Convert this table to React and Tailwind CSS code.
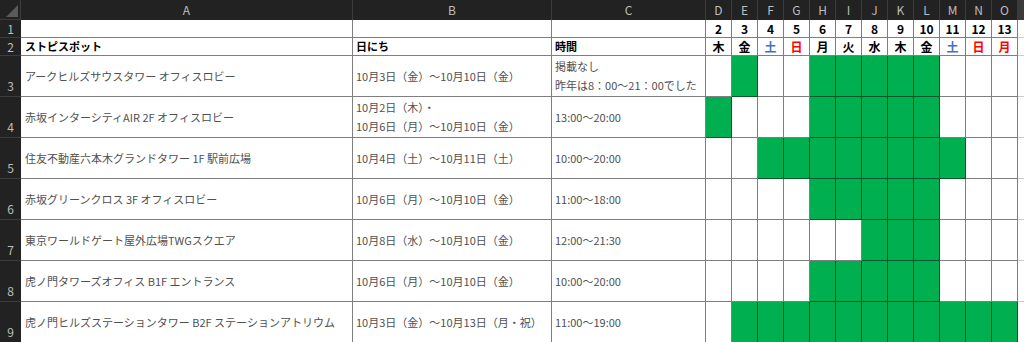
import React from 'react';

const days = [
  { d: 2, w: '木' },
  { d: 3, w: '金' },
  { d: 4, w: '土', c: 'text-[#4472c4]' },
  { d: 5, w: '日', c: 'text-[#ff0000]' },
  { d: 6, w: '月' },
  { d: 7, w: '火' },
  { d: 8, w: '水' },
  { d: 9, w: '木' },
  { d: 10, w: '金' },
  { d: 11, w: '土', c: 'text-[#4472c4]' },
  { d: 12, w: '日', c: 'text-[#ff0000]' },
  { d: 13, w: '月', c: 'text-[#ff0000]' },
];

const letters = ['D', 'E', 'F', 'G', 'H', 'I', 'J', 'K', 'L', 'M', 'N', 'O'];

const range = (a, b) => Array.from({ length: b - a + 1 }, (_, i) => a + i);

const spots = [
  { no: 3, spot: 'アークヒルズサウスタワー オフィスロビー', date: ['10月3日（金）～10月10日（金）'], time: ['掲載なし', '昨年は8：00～21：00でした'], on: [3, ...range(6, 10)] },
  { no: 4, spot: '赤坂インターシティAIR 2F オフィスロビー', date: ['10月2日（木）・', '10月6日（月）～10月10日（金）'], time: ['13:00～20:00'], on: [2, ...range(6, 10)] },
  { no: 5, spot: '住友不動産六本木グランドタワー 1F 駅前広場', date: ['10月4日（土）～10月11日（土）'], time: ['10:00～20:00'], on: range(4, 11) },
  { no: 6, spot: '赤坂グリーンクロス 3F オフィスロビー', date: ['10月6日（月）～10月10日（金）'], time: ['11:00～18:00'], on: range(6, 10) },
  { no: 7, spot: '東京ワールドゲート屋外広場TWGスクエア', date: ['10月8日（水）～10月10日（金）'], time: ['12:00～21:30'], on: range(8, 10) },
  { no: 8, spot: '虎ノ門タワーズオフィス B1F エントランス', date: ['10月6日（月）～10月10日（金）'], time: ['10:00～20:00'], on: range(6, 10) },
  { no: 9, spot: '虎ノ門ヒルズステーションタワー B2F ステーションアトリウム', date: ['10月3日（金）～10月13日（月・祝）'], time: ['11:00～19:00'], on: range(3, 13) },
];

const colHead = 'flex items-center justify-center bg-[#222222] text-[#bdbdbd] text-[12px] border-r border-[#3c3c3c] font-[\'Noto_Sans\',sans-serif]';
const rowHead = 'flex justify-center bg-[#222222] text-[#bdbdbd] text-[12px] border-b border-[#3c3c3c] font-[\'Noto_Sans\',sans-serif]';
const cell = 'border-r border-b border-black/50';

const App = () => {
  return (
    <div className="w-[1024px] h-[342px] overflow-hidden bg-white font-['Noto_Sans_CJK_JP','Noto_Sans',sans-serif]">
      <div className="grid grid-cols-[21px_332px_199px_154px_repeat(12,26px)_1fr] grid-rows-[20px_18px_18px_repeat(7,41px)]">
        {/* Column letters */}
        <div className="relative bg-[#222222] border-r border-b border-[#3c3c3c]">
          <svg className="absolute right-[2px] bottom-[2px]" width="12" height="12" viewBox="0 0 12 12">
            <polygon points="12,0 12,12 0,12" fill="#5a5a5a" />
          </svg>
        </div>
        <div className={colHead}>A</div>
        <div className={colHead}>B</div>
        <div className={colHead}>C</div>
        {letters.map(l => (
          <div key={l} className={colHead}>{l}</div>
        ))}
        <div className="bg-[#3a3a3a]" />

        {/* Row 1 */}
        <div className={`${rowHead} items-center`}>1</div>
        <div className={cell} />
        <div className={cell} />
        <div className={cell} />
        {days.map(d => (
          <div key={d.d} className={`${cell} flex items-center justify-center text-[12px] font-bold text-black`}>{d.d}</div>
        ))}
        <div className="border-b border-black/20" />

        {/* Row 2 */}
        <div className={`${rowHead} items-center`}>2</div>
        <div className={`${cell} flex items-center pl-1 text-[11px] font-bold text-black`}>ストピスポット</div>
        <div className={`${cell} flex items-center pl-[3px] text-[11px] font-bold text-black`}>日にち</div>
        <div className={`${cell} flex items-center pl-[3px] text-[11px] font-bold text-black`}>時間</div>
        {days.map(d => (
          <div key={d.d} className={`${cell} flex items-center justify-center text-[12px] font-bold ${d.c || 'text-black'}`}>{d.w}</div>
        ))}
        <div className="border-b border-black/20" />

        {/* Spots */}
        {spots.map(s => (
          <React.Fragment key={s.no}>
            <div className={`${rowHead} items-end pb-[1px]`}>{s.no}</div>
            <div className={`${cell} flex items-center pl-1 text-[11px] text-[#505050]`}>{s.spot}</div>
            <div className={`${cell} flex flex-col justify-center pl-[3px] text-[11px] leading-[19px] text-[#505050]`}>
              {s.date.map((t, i) => <span key={i}>{t}</span>)}
            </div>
            <div className={`${cell} flex flex-col justify-center pl-[3px] text-[11px] leading-[19px] text-[#505050]`}>
              {s.time.map((t, i) => <span key={i}>{t}</span>)}
            </div>
            {days.map(d => (
              <div key={d.d} className={`${cell} ${s.on.includes(d.d) ? 'bg-[#00b050]' : 'bg-white'}`} />
            ))}
            <div className="border-b border-black/20" />
          </React.Fragment>
        ))}
      </div>
    </div>
  );
};

export default App;
